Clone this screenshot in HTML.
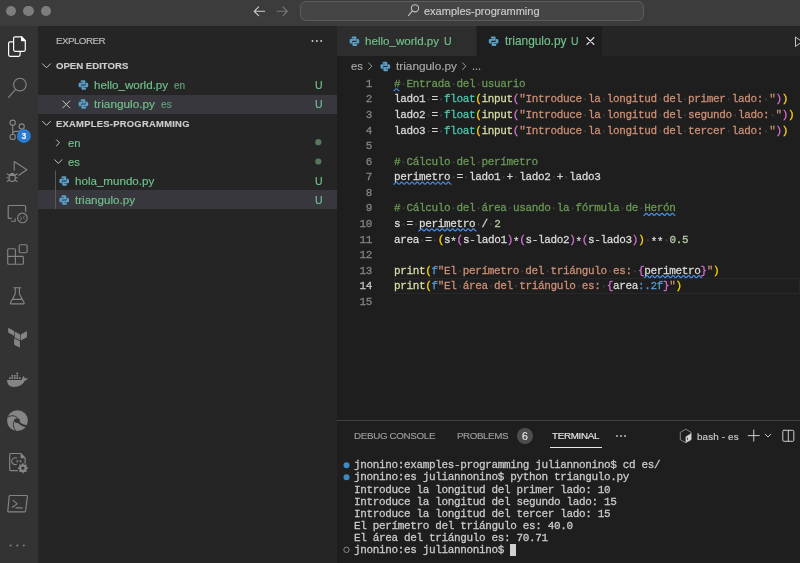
<!DOCTYPE html>
<html><head><meta charset="utf-8">
<style>
*{margin:0;padding:0;box-sizing:border-box}
html,body{width:800px;height:563px;overflow:hidden;background:#1e1e1e}
body{position:relative;font-family:"Liberation Sans",sans-serif;}
.abs{position:absolute}
#title{left:0;top:0;width:800px;height:26px;background:#3c3c3c}
.tl{position:absolute;top:5.9px;width:10.6px;height:10.6px;border-radius:50%;background:#7d7d7d}
#search{left:300px;top:0.5px;width:344px;height:20.5px;background:#454545;border:1px solid #5c5c5c;border-radius:6px}
#act{left:0;top:26px;width:38px;height:537px;background:#333333}
#side{left:38px;top:26px;width:299px;height:537px;background:#252526}
#tabs{left:337px;top:26px;width:463px;height:30px;background:#252526}
.tab{position:absolute;top:0;height:30px}
.ui{white-space:pre;position:absolute;line-height:14px;font-family:"Liberation Sans",sans-serif}
.g{color:#71c28d}
.sel{position:absolute;left:38px;width:299px;height:19px;background:#37373d}
.code{position:absolute;font-family:"Liberation Mono",monospace;font-size:11px;letter-spacing:-0.35px;transform:scaleY(1.05);transform-origin:0 0;white-space:pre;line-height:15.57px;height:15.57px}
.ln{position:absolute;font-family:"Liberation Mono",monospace;font-size:11px;letter-spacing:-0.35px;transform:scaleY(1.05);transform-origin:0 0;white-space:pre;line-height:15.57px;color:#858585;text-align:right;width:40px;left:331.5px}
#panel{left:337px;top:420px;width:463px;height:143px;background:#1e1e1e;border-top:1px solid #414141}
.term{position:absolute;font-family:"Liberation Mono",monospace;font-size:11px;letter-spacing:-0.35px;transform:scaleY(1.05);transform-origin:0 0;white-space:pre;line-height:11.93px;color:#cccccc;left:354px}
svg{position:absolute;left:0;top:0}
.code,.term,.ln,.ui{will-change:transform}
.code,.term,.ln{-webkit-text-stroke:0.25px currentColor}
.ui{-webkit-text-stroke:0.15px currentColor}
</style></head><body>
<!-- backgrounds -->
<div id="title" class="abs">
  <div class="tl" style="left:5.9px"></div>
  <div class="tl" style="left:23.3px"></div>
  <div class="tl" style="left:40.5px"></div>
</div>
<div id="search" class="abs"></div>
<div id="act" class="abs"></div>
<div id="side" class="abs"></div>
<div id="tabs" class="abs">
  <div class="tab" style="left:0;width:138.5px;background:#2d2d2d"></div>
  <div class="tab" style="left:139.5px;width:125.5px;background:#1e1e1e"></div>
</div>
<div id="panel" class="abs"></div>

<!-- sidebar selections -->
<div class="sel" style="top:94.5px"></div>
<div class="sel" style="top:190px"></div>
<div class="abs" style="left:394px;top:278.21px;width:406px;height:15.57px;border:1.5px solid #282828"></div>

<!-- title text -->
<div class="ui" style="left:424px;top:4px;font-size:11px;color:#cccccc">examples-programming</div>

<!-- sidebar text -->
<div class="ui" style="left:55.5px;top:33.5px;font-size:9.8px;color:#bbbbbb;letter-spacing:-0.55px">EXPLORER</div>
<div class="ui" style="left:55.5px;top:58.5px;font-size:9.6px;font-weight:bold;color:#cccccc">OPEN EDITORS</div>
<div class="ui g" style="left:93.5px;top:78px;font-size:11.6px">hello_world.py</div>
<div class="ui" style="left:174px;top:79px;font-size:10px;color:#62a179">en</div>
<div class="ui g" style="left:315px;top:78px;font-size:10.5px">U</div>
<div class="ui g" style="left:93.5px;top:97px;font-size:11.8px">triangulo.py</div>
<div class="ui" style="left:160.5px;top:98px;font-size:10.2px;color:#62a179">es</div>
<div class="ui g" style="left:315px;top:97px;font-size:10.5px">U</div>
<div class="ui" style="left:55.5px;top:117px;font-size:9.4px;letter-spacing:0.28px;font-weight:bold;color:#cccccc">EXAMPLES-PROGRAMMING</div>
<div class="ui g" style="left:67.5px;top:135.5px;font-size:11.2px">en</div>
<div class="ui g" style="left:67.5px;top:154.5px;font-size:11.2px">es</div>
<div class="ui g" style="left:74.5px;top:174px;font-size:11.6px">hola_mundo.py</div>
<div class="ui g" style="left:315px;top:174px;font-size:10.5px">U</div>
<div class="ui g" style="left:74.5px;top:192.5px;font-size:11.6px">triangulo.py</div>
<div class="ui g" style="left:315px;top:192.5px;font-size:10.5px">U</div>

<!-- tabs text -->
<div class="ui g" style="left:365px;top:34px;font-size:11.6px">hello_world.py</div>
<div class="ui g" style="left:444px;top:34px;font-size:10.5px">U</div>
<div class="ui g" style="left:504.5px;top:34px;font-size:11.9px">triangulo.py</div>
<div class="ui g" style="left:571px;top:34px;font-size:10.5px">U</div>

<!-- breadcrumbs -->
<div class="ui" style="left:350.5px;top:59px;font-size:11.2px;color:#a9a9a9">es</div>
<div class="ui" style="left:396px;top:59px;font-size:11.8px;color:#a9a9a9">triangulo.py</div>
<div class="ui" style="left:471.5px;top:59px;font-size:11px;color:#a9a9a9">...</div>

<!-- code -->
<div class="ln" style="top:75.80px;color:#858585">1</div>
<div class="code" style="top:75.80px;left:393.5px"><span style="color:#6a9955">#</span><span style="color:#404040">·</span><span style="color:#6a9955">Entrada</span><span style="color:#404040">·</span><span style="color:#6a9955">del</span><span style="color:#404040">·</span><span style="color:#6a9955">usuario</span></div>
<div class="ln" style="top:91.37px;color:#858585">2</div>
<div class="code" style="top:91.37px;left:393.5px"><span style="color:#dcdcdc">lado1</span><span style="color:#404040">·</span><span style="color:#d4d4d4">=</span><span style="color:#404040">·</span><span style="color:#4ec9b0">float</span><span style="color:#ffd700">(</span><span style="color:#dcdcaa">input</span><span style="color:#da70d6">(</span><span style="color:#ce9178">"Introduce</span><span style="color:#404040">·</span><span style="color:#ce9178">la</span><span style="color:#404040">·</span><span style="color:#ce9178">longitud</span><span style="color:#404040">·</span><span style="color:#ce9178">del</span><span style="color:#404040">·</span><span style="color:#ce9178">primer</span><span style="color:#404040">·</span><span style="color:#ce9178">lado:</span><span style="color:#404040">·</span><span style="color:#ce9178">"</span><span style="color:#da70d6">)</span><span style="color:#ffd700">)</span></div>
<div class="ln" style="top:106.94px;color:#858585">3</div>
<div class="code" style="top:106.94px;left:393.5px"><span style="color:#dcdcdc">lado2</span><span style="color:#404040">·</span><span style="color:#d4d4d4">=</span><span style="color:#404040">·</span><span style="color:#4ec9b0">float</span><span style="color:#ffd700">(</span><span style="color:#dcdcaa">input</span><span style="color:#da70d6">(</span><span style="color:#ce9178">"Introduce</span><span style="color:#404040">·</span><span style="color:#ce9178">la</span><span style="color:#404040">·</span><span style="color:#ce9178">longitud</span><span style="color:#404040">·</span><span style="color:#ce9178">del</span><span style="color:#404040">·</span><span style="color:#ce9178">segundo</span><span style="color:#404040">·</span><span style="color:#ce9178">lado:</span><span style="color:#404040">·</span><span style="color:#ce9178">"</span><span style="color:#da70d6">)</span><span style="color:#ffd700">)</span></div>
<div class="ln" style="top:122.51px;color:#858585">4</div>
<div class="code" style="top:122.51px;left:393.5px"><span style="color:#dcdcdc">lado3</span><span style="color:#404040">·</span><span style="color:#d4d4d4">=</span><span style="color:#404040">·</span><span style="color:#4ec9b0">float</span><span style="color:#ffd700">(</span><span style="color:#dcdcaa">input</span><span style="color:#da70d6">(</span><span style="color:#ce9178">"Introduce</span><span style="color:#404040">·</span><span style="color:#ce9178">la</span><span style="color:#404040">·</span><span style="color:#ce9178">longitud</span><span style="color:#404040">·</span><span style="color:#ce9178">del</span><span style="color:#404040">·</span><span style="color:#ce9178">tercer</span><span style="color:#404040">·</span><span style="color:#ce9178">lado:</span><span style="color:#404040">·</span><span style="color:#ce9178">"</span><span style="color:#da70d6">)</span><span style="color:#ffd700">)</span></div>
<div class="ln" style="top:138.08px;color:#858585">5</div>
<div class="ln" style="top:153.65px;color:#858585">6</div>
<div class="code" style="top:153.65px;left:393.5px"><span style="color:#6a9955">#</span><span style="color:#404040">·</span><span style="color:#6a9955">Cálculo</span><span style="color:#404040">·</span><span style="color:#6a9955">del</span><span style="color:#404040">·</span><span style="color:#6a9955">perímetro</span></div>
<div class="ln" style="top:169.22px;color:#858585">7</div>
<div class="code" style="top:169.22px;left:393.5px"><span style="color:#dcdcdc">perimetro</span><span style="color:#404040">·</span><span style="color:#d4d4d4">=</span><span style="color:#404040">·</span><span style="color:#dcdcdc">lado1</span><span style="color:#404040">·</span><span style="color:#d4d4d4">+</span><span style="color:#404040">·</span><span style="color:#dcdcdc">lado2</span><span style="color:#404040">·</span><span style="color:#d4d4d4">+</span><span style="color:#404040">·</span><span style="color:#dcdcdc">lado3</span></div>
<div class="ln" style="top:184.79px;color:#858585">8</div>
<div class="ln" style="top:200.36px;color:#858585">9</div>
<div class="code" style="top:200.36px;left:393.5px"><span style="color:#6a9955">#</span><span style="color:#404040">·</span><span style="color:#6a9955">Cálculo</span><span style="color:#404040">·</span><span style="color:#6a9955">del</span><span style="color:#404040">·</span><span style="color:#6a9955">área</span><span style="color:#404040">·</span><span style="color:#6a9955">usando</span><span style="color:#404040">·</span><span style="color:#6a9955">la</span><span style="color:#404040">·</span><span style="color:#6a9955">fórmula</span><span style="color:#404040">·</span><span style="color:#6a9955">de</span><span style="color:#404040">·</span><span style="color:#6a9955">Herón</span></div>
<div class="ln" style="top:215.93px;color:#858585">10</div>
<div class="code" style="top:215.93px;left:393.5px"><span style="color:#dcdcdc">s</span><span style="color:#404040">·</span><span style="color:#d4d4d4">=</span><span style="color:#404040">·</span><span style="color:#dcdcdc">perimetro</span><span style="color:#404040">·</span><span style="color:#d4d4d4">/</span><span style="color:#404040">·</span><span style="color:#b5cea8">2</span></div>
<div class="ln" style="top:231.50px;color:#858585">11</div>
<div class="code" style="top:231.50px;left:393.5px"><span style="color:#dcdcdc">area</span><span style="color:#404040">·</span><span style="color:#d4d4d4">=</span><span style="color:#404040">·</span><span style="color:#ffd700">(</span><span style="color:#dcdcdc">s</span><span style="color:#d4d4d4"><span style="position:relative;top:1.8px">*</span></span><span style="color:#da70d6">(</span><span style="color:#dcdcdc">s</span><span style="color:#d4d4d4">-</span><span style="color:#dcdcdc">lado1</span><span style="color:#da70d6">)</span><span style="color:#d4d4d4"><span style="position:relative;top:1.8px">*</span></span><span style="color:#da70d6">(</span><span style="color:#dcdcdc">s</span><span style="color:#d4d4d4">-</span><span style="color:#dcdcdc">lado2</span><span style="color:#da70d6">)</span><span style="color:#d4d4d4"><span style="position:relative;top:1.8px">*</span></span><span style="color:#da70d6">(</span><span style="color:#dcdcdc">s</span><span style="color:#d4d4d4">-</span><span style="color:#dcdcdc">lado3</span><span style="color:#da70d6">)</span><span style="color:#ffd700">)</span><span style="color:#404040">·</span><span style="color:#d4d4d4"><span style="position:relative;top:1.8px">*</span><span style="position:relative;top:1.8px">*</span></span><span style="color:#404040">·</span><span style="color:#b5cea8">0.5</span></div>
<div class="ln" style="top:247.07px;color:#858585">12</div>
<div class="ln" style="top:262.64px;color:#858585">13</div>
<div class="code" style="top:262.64px;left:393.5px"><span style="color:#dcdcaa">print</span><span style="color:#ffd700">(</span><span style="color:#569cd6">f</span><span style="color:#ce9178">"El</span><span style="color:#404040">·</span><span style="color:#ce9178">perímetro</span><span style="color:#404040">·</span><span style="color:#ce9178">del</span><span style="color:#404040">·</span><span style="color:#ce9178">triángulo</span><span style="color:#404040">·</span><span style="color:#ce9178">es:</span><span style="color:#404040">·</span><span style="color:#da70d6">{</span><span style="color:#dcdcdc">perimetro</span><span style="color:#da70d6">}</span><span style="color:#ce9178">"</span><span style="color:#ffd700">)</span></div>
<div class="ln" style="top:278.21px;color:#c6c6c6">14</div>
<div class="code" style="top:278.21px;left:393.5px"><span style="color:#dcdcaa">print</span><span style="color:#ffd700">(</span><span style="color:#569cd6">f</span><span style="color:#ce9178">"El</span><span style="color:#404040">·</span><span style="color:#ce9178">área</span><span style="color:#404040">·</span><span style="color:#ce9178">del</span><span style="color:#404040">·</span><span style="color:#ce9178">triángulo</span><span style="color:#404040">·</span><span style="color:#ce9178">es:</span><span style="color:#404040">·</span><span style="color:#da70d6">{</span><span style="color:#dcdcdc">area</span><span style="color:#569cd6">:.2f</span><span style="color:#da70d6">}</span><span style="color:#ce9178">"</span><span style="color:#ffd700">)</span></div>
<div class="ln" style="top:293.78px;color:#858585">15</div>

<!-- panel text -->
<div class="ui" style="left:354px;top:428.5px;font-size:9.8px;letter-spacing:-0.33px;color:#9d9d9d">DEBUG CONSOLE</div>
<div class="ui" style="left:456.5px;top:428.5px;font-size:9.8px;letter-spacing:-0.42px;color:#9d9d9d">PROBLEMS</div>
<div class="abs" style="left:517px;top:428px;width:16px;height:16px;border-radius:50%;background:#4d4d4d"></div>
<div class="ui" style="left:522.4px;top:429.2px;font-size:10.5px;color:#e8e8e8">6</div>
<div class="ui" style="left:552px;top:428.5px;font-size:9.8px;letter-spacing:-0.3px;color:#e7e7e7">TERMINAL</div>
<div class="abs" style="left:550px;top:447px;width:52px;height:1px;background:#e7e7e7"></div>
<div class="ui" style="left:696.5px;top:429.8px;font-size:9.9px;letter-spacing:0.12px;color:#cccccc">bash - es</div>

<div class="term" style="top:460.30px">jnonino:examples-programming juliannonino$ cd es/</div>
<div class="term" style="top:472.43px">jnonino:es juliannonino$ python triangulo.py</div>
<div class="term" style="top:484.56px">Introduce la longitud del primer lado: 10</div>
<div class="term" style="top:496.69px">Introduce la longitud del segundo lado: 15</div>
<div class="term" style="top:508.82px">Introduce la longitud del tercer lado: 15</div>
<div class="term" style="top:520.95px">El perímetro del triángulo es: 40.0</div>
<div class="term" style="top:533.08px">El área del triángulo es: 70.71</div>
<div class="term" style="top:545.21px">jnonino:es juliannonino$ </div>
<div class="abs" style="left:510px;top:544px;width:6px;height:12px;background:#d0d0d0"></div>

<!-- icons -->
<svg width="800" height="563" viewBox="0 0 800 563">
  
  <!-- title bar arrows -->
  <g fill="none" stroke="#cccccc" stroke-width="1.1" stroke-linecap="round" stroke-linejoin="round">
    <path d="M254.2 11.3 H264.6 M258.6 6.9 L254.2 11.3 L258.6 15.7"/>
  </g>
  <g fill="none" stroke="#7a7a7a" stroke-width="1.1" stroke-linecap="round" stroke-linejoin="round">
    <path d="M277.2 11.3 H287.3 M283 6.9 L287.3 11.3 L283 15.7"/>
  </g>
  <!-- search icon -->
  <g fill="none" stroke="#bdbdbd" stroke-width="1.1" stroke-linecap="round">
    <circle cx="415" cy="8.3" r="3.6"/>
    <path d="M412.4 10.9 L408.4 15.6"/>
  </g>

  <!-- activity bar icons -->
  <g fill="none" stroke="#ffffff" stroke-width="1.2" stroke-linejoin="round">
    <path d="M13.6 41.8 H10.1 Q8.6 41.8 8.6 43.3 V54.8 Q8.6 56.3 10.1 56.3 H18.6 Q20.1 56.3 20.1 54.8 V51.3"/>
    <path d="M15.1 36.8 H21.6 L25.3 40.6 V49.8 Q25.3 51.3 23.8 51.3 H15.1 Q13.6 51.3 13.6 49.8 V38.3 Q13.6 36.8 15.1 36.8 Z"/>
    <path d="M21.6 37 V40.6 H25.1 Z" fill="#ffffff"/>
  </g>
  <g fill="none" stroke="#858585" stroke-width="1.15" stroke-linecap="round" stroke-linejoin="round">
    <!-- search -->
    <circle cx="19.9" cy="84.6" r="6.3"/>
    <path d="M15.6 89.3 L8.6 97.4"/>
    <!-- scm -->
    <circle cx="12.7" cy="122.7" r="2.6"/>
    <circle cx="21.7" cy="126.4" r="2.6"/>
    <circle cx="12.7" cy="136.9" r="2.6"/>
    <path d="M12.7 125.3 V134.3 M21.7 129 Q21.7 131.4 19 131.4 H15.5 Q12.7 131.4 12.7 133.8"/>
    <!-- run debug -->
    <path d="M14.2 170.2 V161.6 L26.9 169.7 L18.8 175.2"/>
    <path d="M9.6 174.9 Q12.2 171.9 14.8 174.9"/>
    <ellipse cx="12.2" cy="177.9" rx="3.1" ry="3.5"/>
    <path d="M9.2 175.3 H15.2 M7.2 173.9 L9.3 175.1 M17.2 173.9 L15.1 175.1 M7 177.7 H9 M15.4 177.7 H17.4 M7.2 181.5 L9.3 180.3 M17.2 181.5 L15.1 180.3"/>
    <!-- remote -->
    <path d="M11.3 218.4 H9.2 Q8.2 218.4 8.2 217.4 V206.5 Q8.2 205.5 9.2 205.5 H24.6 Q25.6 205.5 25.6 206.5 V211.4"/>
    <path d="M15.2 218.8 V221.2 H11.5"/>
    <circle cx="22.4" cy="217.9" r="4.8"/>
    <path d="M20.1 216.6 L21.6 218 L20.3 220.5 M24.6 216.2 L23 217.5 L24.3 218.6" stroke-width="0.8"/>
    <!-- extensions -->
    <path d="M8.7 248.7 H14.4 Q15.4 248.7 15.4 249.7 V263.2 Q15.4 264.2 14.4 264.2 H8.7 Q7.7 264.2 7.7 263.2 V249.7 Q7.7 248.7 8.7 248.7 Z"/>
    <path d="M7.7 256.4 H22.4 Q23.4 256.4 23.4 257.4 V263.2 Q23.4 264.2 22.4 264.2 H15.4"/>
    <rect x="19.2" y="244.7" width="7.9" height="8" rx="1.2"/>
    <!-- flask -->
    <path d="M13.7 287.7 H20.7 M15.2 287.7 V293.9 L10.6 302.6 Q10.1 303.9 11.4 303.9 H23.2 Q24.5 303.9 24 302.6 L19.4 293.9 V287.7 M13 299.4 H21.6"/>
    <!-- C++ -->
    <path d="M20.7 453.5 H10.7 Q9.7 453.5 9.7 454.5 V469.6 Q9.7 470.6 10.7 470.6 H17.5 M20.7 453.5 L25.1 458.2 V463.2"/>
    <path d="M16.5 458.1 A3.4 3.4 0 1 0 16.5 464.3" stroke-width="1.1"/>
    <path d="M16.4 461.2 H18.3 M17.35 460.25 V462.15 M19.6 461.2 H21.5 M20.55 460.25 V462.15" stroke-width="0.75"/>
    <path d="M20.9 453.8 V458 H24.9 Z" fill="#858585" stroke-width="0.6"/>
    <!-- terminal -->
    <path d="M10.1 495.5 H26.6 Q27.5 495.5 27.4 496.4 L25.6 511 Q25.5 511.9 24.6 511.9 H8.6 Q7.7 511.9 7.8 511 L9.2 496.4 Q9.3 495.5 10.1 495.5 Z"/>
    <path d="M13.2 500.4 L17.2 503.9 L12.4 507.2 M16 507.9 H22.1"/>
  </g>
  <!-- filled activity icons -->
  <g fill="#858585">
    <!-- scm badge -->
    <circle cx="23.9" cy="135.9" r="7" fill="#2b7bd1"/>
    <!-- terraform -->
    <path d="M8.2 327.7 L14 331 V335.7 L8.2 332.6 Z"/>
    <path d="M14.7 331.5 L20.2 334.4 V340.5 L14.7 337.5 Z"/>
    <path d="M20.8 334.4 L26.9 331 V337.2 L20.8 340.5 Z"/>
    <path d="M14.2 338.3 L19.9 341.3 V347.8 L14.2 344.8 Z"/>
    <!-- docker -->
    <path d="M7 380 H21.8 C22 378.6 22.6 377.3 23.4 375.9 C24.3 376.8 24.8 377.6 24.9 378.5 C26 378 27 378.1 27.8 378.4 C27.2 379.7 26.2 380.4 24.7 380.7 C22.6 385 18.8 386.9 13.8 386.9 C9.3 386.9 7.2 384.2 7 380 Z"/>
    <rect x="9" y="377.2" width="1.7" height="1.8"/><rect x="11.4" y="377.2" width="1.7" height="1.8"/><rect x="13.9" y="377.2" width="1.7" height="1.8"/><rect x="16.4" y="377.2" width="1.7" height="1.8"/><rect x="18.9" y="377.2" width="1.7" height="1.8"/>
    <rect x="11.4" y="374.9" width="1.7" height="1.8"/><rect x="13.9" y="374.9" width="1.7" height="1.8"/><rect x="16.4" y="374.9" width="1.7" height="1.8"/>
    <rect x="16.4" y="372.5" width="1.7" height="1.8"/>
    <!-- edge -->
    <circle cx="17.45" cy="420.7" r="10.4"/>
    <!-- gear -->
    <circle cx="22.9" cy="468.2" r="3.9"/>
    <!-- more dots -->
    <circle cx="10.6" cy="545.5" r="1"/><circle cx="17.3" cy="545.5" r="1"/><circle cx="23.8" cy="545.5" r="1"/>
  </g>
  <text x="23.9" y="139" font-family="Liberation Sans" font-weight="bold" font-size="8.8" fill="#ffffff" text-anchor="middle">3</text>
  <!-- edge swirl -->
  <g fill="none" stroke="#333333" stroke-linecap="round">
    <path d="M8 417.2 C10.5 415 15 415 17.5 418" stroke-width="1"/>
    <path d="M18.2 421.6 C20 424 23 426.2 28 425.9" stroke-width="2"/>
    <path d="M14.3 420.5 C12.6 423.5 13 428 16 431.3" stroke-width="0.9"/>
  </g>
  <ellipse cx="17" cy="420.6" rx="2.8" ry="2.3" fill="#333333"/>
  <!-- gear teeth -->
  <g stroke="#858585" stroke-width="1.5">
    <path d="M22.9 463.2 V473.2 M17.9 468.2 H27.9 M19.4 464.7 L26.4 471.7 M26.4 464.7 L19.4 471.7"/>
  </g>
  <circle cx="22.9" cy="468.2" r="1.6" fill="#333333"/>

  <!-- sidebar icons -->
  <g fill="#cccccc"><circle cx="312.5" cy="41.1" r="1"/><circle cx="316.9" cy="41.1" r="1"/><circle cx="321.2" cy="41.1" r="1"/></g>
  <g fill="none" stroke="#c5c5c5" stroke-width="1" stroke-linecap="round" stroke-linejoin="round">
    <path d="M42.5 63.8 L46.5 67.8 L50.5 63.8"/>
    <path d="M42.5 121.3 L46.5 125.3 L50.5 121.3"/>
    <path d="M56.5 139.8 L59.5 142.8 L56.5 145.8"/>
    <path d="M54.7 159.8 L58.3 163.4 L61.9 159.8"/>
    <path d="M62.8 100.9 L69.8 107.9 M69.8 100.9 L62.8 107.9"/>
  </g>
  <path d="M55.5 170.5 V209" stroke="#585858" stroke-width="1"/>
  <circle cx="318.3" cy="142.2" r="3.1" fill="#55785e"/>
  <circle cx="318.3" cy="161.5" r="3.1" fill="#55785e"/>
  <g transform="translate(78.4 80)"><path d="M3.3 0.3 H6.0 Q7.0 0.3 7.0 1.3 V4.4 H3.5 Q2.7 4.4 2.7 5.2 V7.3 H1.3 Q0.2 7.3 0.2 5.8 V4.0 Q0.2 2.7 1.3 2.7 H4.9 V2.2 H2.3 V1.3 Q2.3 0.3 3.3 0.3 Z" fill="#5b9fc8"/>
      <path d="M6.7 9.7 H4.0 Q3.0 9.7 3.0 8.7 V5.6 H6.5 Q7.3 5.6 7.3 4.8 V2.7 H8.7 Q9.8 2.7 9.8 4.2 V6.0 Q9.8 7.3 8.7 7.3 H5.1 V7.8 H7.7 V8.7 Q7.7 9.7 6.7 9.7 Z" fill="#5b9fc8"/></g>
  <g transform="translate(78.4 99)"><path d="M3.3 0.3 H6.0 Q7.0 0.3 7.0 1.3 V4.4 H3.5 Q2.7 4.4 2.7 5.2 V7.3 H1.3 Q0.2 7.3 0.2 5.8 V4.0 Q0.2 2.7 1.3 2.7 H4.9 V2.2 H2.3 V1.3 Q2.3 0.3 3.3 0.3 Z" fill="#5b9fc8"/>
      <path d="M6.7 9.7 H4.0 Q3.0 9.7 3.0 8.7 V5.6 H6.5 Q7.3 5.6 7.3 4.8 V2.7 H8.7 Q9.8 2.7 9.8 4.2 V6.0 Q9.8 7.3 8.7 7.3 H5.1 V7.8 H7.7 V8.7 Q7.7 9.7 6.7 9.7 Z" fill="#5b9fc8"/></g>
  <g transform="translate(59.2 176)"><path d="M3.3 0.3 H6.0 Q7.0 0.3 7.0 1.3 V4.4 H3.5 Q2.7 4.4 2.7 5.2 V7.3 H1.3 Q0.2 7.3 0.2 5.8 V4.0 Q0.2 2.7 1.3 2.7 H4.9 V2.2 H2.3 V1.3 Q2.3 0.3 3.3 0.3 Z" fill="#5b9fc8"/>
      <path d="M6.7 9.7 H4.0 Q3.0 9.7 3.0 8.7 V5.6 H6.5 Q7.3 5.6 7.3 4.8 V2.7 H8.7 Q9.8 2.7 9.8 4.2 V6.0 Q9.8 7.3 8.7 7.3 H5.1 V7.8 H7.7 V8.7 Q7.7 9.7 6.7 9.7 Z" fill="#5b9fc8"/></g>
  <g transform="translate(59.2 195)"><path d="M3.3 0.3 H6.0 Q7.0 0.3 7.0 1.3 V4.4 H3.5 Q2.7 4.4 2.7 5.2 V7.3 H1.3 Q0.2 7.3 0.2 5.8 V4.0 Q0.2 2.7 1.3 2.7 H4.9 V2.2 H2.3 V1.3 Q2.3 0.3 3.3 0.3 Z" fill="#5b9fc8"/>
      <path d="M6.7 9.7 H4.0 Q3.0 9.7 3.0 8.7 V5.6 H6.5 Q7.3 5.6 7.3 4.8 V2.7 H8.7 Q9.8 2.7 9.8 4.2 V6.0 Q9.8 7.3 8.7 7.3 H5.1 V7.8 H7.7 V8.7 Q7.7 9.7 6.7 9.7 Z" fill="#5b9fc8"/></g>
  <!-- tab icons -->
  <g transform="translate(349.4 36.3)"><path d="M3.3 0.3 H6.0 Q7.0 0.3 7.0 1.3 V4.4 H3.5 Q2.7 4.4 2.7 5.2 V7.3 H1.3 Q0.2 7.3 0.2 5.8 V4.0 Q0.2 2.7 1.3 2.7 H4.9 V2.2 H2.3 V1.3 Q2.3 0.3 3.3 0.3 Z" fill="#5b9fc8"/>
      <path d="M6.7 9.7 H4.0 Q3.0 9.7 3.0 8.7 V5.6 H6.5 Q7.3 5.6 7.3 4.8 V2.7 H8.7 Q9.8 2.7 9.8 4.2 V6.0 Q9.8 7.3 8.7 7.3 H5.1 V7.8 H7.7 V8.7 Q7.7 9.7 6.7 9.7 Z" fill="#5b9fc8"/></g>
  <g transform="translate(488.6 36.3)"><path d="M3.3 0.3 H6.0 Q7.0 0.3 7.0 1.3 V4.4 H3.5 Q2.7 4.4 2.7 5.2 V7.3 H1.3 Q0.2 7.3 0.2 5.8 V4.0 Q0.2 2.7 1.3 2.7 H4.9 V2.2 H2.3 V1.3 Q2.3 0.3 3.3 0.3 Z" fill="#5b9fc8"/>
      <path d="M6.7 9.7 H4.0 Q3.0 9.7 3.0 8.7 V5.6 H6.5 Q7.3 5.6 7.3 4.8 V2.7 H8.7 Q9.8 2.7 9.8 4.2 V6.0 Q9.8 7.3 8.7 7.3 H5.1 V7.8 H7.7 V8.7 Q7.7 9.7 6.7 9.7 Z" fill="#5b9fc8"/></g>
  <path d="M586.9 37.5 L593.9 44.5 M593.9 37.5 L586.9 44.5" stroke="#e0e0e0" stroke-width="1.1" stroke-linecap="round"/>
  <path d="M795.5 37 V46.5 L802 41.7 Z" fill="none" stroke="#c5c5c5" stroke-width="1"/>
  <!-- breadcrumb -->
  <path d="M368.3 62.5 L371.8 66.2 L368.3 69.9 M462.3 62.5 L465.8 66.2 L462.3 69.9" fill="none" stroke="#a9a9a9" stroke-width="0.9"/>
  <g transform="translate(380.3 61.5)"><path d="M3.3 0.3 H6.0 Q7.0 0.3 7.0 1.3 V4.4 H3.5 Q2.7 4.4 2.7 5.2 V7.3 H1.3 Q0.2 7.3 0.2 5.8 V4.0 Q0.2 2.7 1.3 2.7 H4.9 V2.2 H2.3 V1.3 Q2.3 0.3 3.3 0.3 Z" fill="#5b9fc8"/>
      <path d="M6.7 9.7 H4.0 Q3.0 9.7 3.0 8.7 V5.6 H6.5 Q7.3 5.6 7.3 4.8 V2.7 H8.7 Q9.8 2.7 9.8 4.2 V6.0 Q9.8 7.3 8.7 7.3 H5.1 V7.8 H7.7 V8.7 Q7.7 9.7 6.7 9.7 Z" fill="#5b9fc8"/></g>
  <!-- squiggles -->
  <path d="M393.80 90.77 C395.10 90.77 395.10 88.77 396.40 88.77 C397.70 88.77 397.70 90.77 399.00 90.77" fill="none" stroke="#4a8ee6" stroke-width="1.15" stroke-linecap="round"/>
<path d="M393.80 184.19 C395.10 184.19 395.10 182.19 396.40 182.19 C397.70 182.19 397.70 184.19 399.00 184.19 C400.30 184.19 400.30 182.19 401.60 182.19 C402.90 182.19 402.90 184.19 404.20 184.19 C405.50 184.19 405.50 182.19 406.80 182.19 C408.10 182.19 408.10 184.19 409.40 184.19 C410.70 184.19 410.70 182.19 412.00 182.19 C413.30 182.19 413.30 184.19 414.60 184.19 C415.90 184.19 415.90 182.19 417.20 182.19 C418.50 182.19 418.50 184.19 419.80 184.19 C421.10 184.19 421.10 182.19 422.40 182.19 C423.70 182.19 423.70 184.19 425.00 184.19 C426.30 184.19 426.30 182.19 427.60 182.19 C428.90 182.19 428.90 184.19 430.20 184.19 C431.50 184.19 431.50 182.19 432.80 182.19 C434.10 182.19 434.10 184.19 435.40 184.19 C436.70 184.19 436.70 182.19 438.00 182.19 C439.30 182.19 439.30 184.19 440.60 184.19 C441.90 184.19 441.90 182.19 443.20 182.19 C444.50 182.19 444.50 184.19 445.80 184.19 C447.10 184.19 447.10 182.19 448.40 182.19 C449.70 182.19 449.70 184.19 451.00 184.19" fill="none" stroke="#4a8ee6" stroke-width="1.15" stroke-linecap="round"/>
<path d="M643.80 215.33 C645.10 215.33 645.10 213.33 646.40 213.33 C647.70 213.33 647.70 215.33 649.00 215.33 C650.30 215.33 650.30 213.33 651.60 213.33 C652.90 213.33 652.90 215.33 654.20 215.33 C655.50 215.33 655.50 213.33 656.80 213.33 C658.10 213.33 658.10 215.33 659.40 215.33 C660.70 215.33 660.70 213.33 662.00 213.33 C663.30 213.33 663.30 215.33 664.60 215.33 C665.90 215.33 665.90 213.33 667.20 213.33 C668.50 213.33 668.50 215.33 669.80 215.33 C671.10 215.33 671.10 213.33 672.40 213.33 C673.70 213.33 673.70 215.33 675.00 215.33" fill="none" stroke="#4a8ee6" stroke-width="1.15" stroke-linecap="round"/>
<path d="M418.80 230.90 C420.10 230.90 420.10 228.90 421.40 228.90 C422.70 228.90 422.70 230.90 424.00 230.90 C425.30 230.90 425.30 228.90 426.60 228.90 C427.90 228.90 427.90 230.90 429.20 230.90 C430.50 230.90 430.50 228.90 431.80 228.90 C433.10 228.90 433.10 230.90 434.40 230.90 C435.70 230.90 435.70 228.90 437.00 228.90 C438.30 228.90 438.30 230.90 439.60 230.90 C440.90 230.90 440.90 228.90 442.20 228.90 C443.50 228.90 443.50 230.90 444.80 230.90 C446.10 230.90 446.10 228.90 447.40 228.90 C448.70 228.90 448.70 230.90 450.00 230.90 C451.30 230.90 451.30 228.90 452.60 228.90 C453.90 228.90 453.90 230.90 455.20 230.90 C456.50 230.90 456.50 228.90 457.80 228.90 C459.10 228.90 459.10 230.90 460.40 230.90 C461.70 230.90 461.70 228.90 463.00 228.90 C464.30 228.90 464.30 230.90 465.60 230.90 C466.90 230.90 466.90 228.90 468.20 228.90 C469.50 228.90 469.50 230.90 470.80 230.90 C472.10 230.90 472.10 228.90 473.40 228.90 C474.70 228.90 474.70 230.90 476.00 230.90" fill="none" stroke="#4a8ee6" stroke-width="1.15" stroke-linecap="round"/>
<path d="M644.42 277.61 C645.72 277.61 645.72 275.61 647.02 275.61 C648.32 275.61 648.32 277.61 649.62 277.61 C650.92 277.61 650.92 275.61 652.23 275.61 C653.52 275.61 653.52 277.61 654.83 277.61 C656.12 277.61 656.12 275.61 657.43 275.61 C658.73 275.61 658.73 277.61 660.03 277.61 C661.33 277.61 661.33 275.61 662.63 275.61 C663.93 275.61 663.93 277.61 665.23 277.61 C666.53 277.61 666.53 275.61 667.83 275.61 C669.13 275.61 669.13 277.61 670.43 277.61 C671.73 277.61 671.73 275.61 673.03 275.61 C674.33 275.61 674.33 277.61 675.63 277.61 C676.93 277.61 676.93 275.61 678.23 275.61 C679.53 275.61 679.53 277.61 680.83 277.61 C682.13 277.61 682.13 275.61 683.43 275.61 C684.73 275.61 684.73 277.61 686.03 277.61 C687.33 277.61 687.33 275.61 688.63 275.61 C689.93 275.61 689.93 277.61 691.23 277.61 C692.53 277.61 692.53 275.61 693.83 275.61 C695.13 275.61 695.13 277.61 696.43 277.61 C697.73 277.61 697.73 275.61 699.03 275.61 C700.33 275.61 700.33 277.61 701.63 277.61" fill="none" stroke="#4a8ee6" stroke-width="1.15" stroke-linecap="round"/>

  <!-- panel icons -->
  <g fill="#cccccc"><circle cx="617" cy="436" r="0.9"/><circle cx="621" cy="436" r="0.9"/><circle cx="625" cy="436" r="0.9"/></g>
  <g fill="none" stroke="#cccccc" stroke-width="1" stroke-linejoin="round" stroke-linecap="round">

    <path d="M748.2 435.6 H759.3 M753.75 430 V441.2"/>
    <path d="M765.2 434.2 L768 437 L770.8 434.2"/>
    <rect x="782.8" y="430.3" width="11" height="11" rx="1"/>
    <path d="M788.3 430.3 V441.3"/>
  </g>
  <path d="M685.75 429.2 L691.2 432.4 V439.6 L685.75 442.8 L680.3 439.6 V432.4 Z" fill="none" stroke="#909090" stroke-width="0.9" stroke-linejoin="round"/>
  <path d="M685.6 436.8 L691.1 433.3 V439.7 L685.6 442.7 Z" fill="#d4d4d4"/>
  <path d="M687.4 437.4 V440.2" stroke="#1e1e1e" stroke-width="0.7"/>
  <circle cx="346.5" cy="465.3" r="3" fill="#3a8cc4"/>
  <circle cx="346.5" cy="477.2" r="3" fill="#3a8cc4"/>
  <circle cx="346.5" cy="549.8" r="2.7" fill="none" stroke="#8a8a8a" stroke-width="1"/>
</svg>
</body></html>
